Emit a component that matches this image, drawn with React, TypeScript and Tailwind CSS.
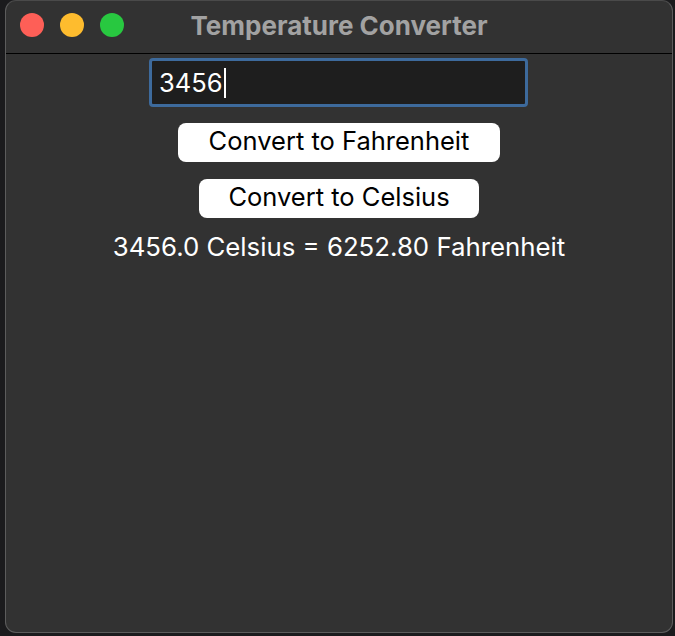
export default function App() {
  return (
    <div className="w-[675px] h-[636px] bg-[#1b1b1d] pl-[5px] pr-[2px] pb-[3px] overflow-hidden" style={{ fontFamily: 'Inter, "Liberation Sans", sans-serif' }}>
      <div className="h-full flex flex-col bg-[#323232] rounded-[11px] border border-[#5c5c5c] border-t-[#4a4a4a] overflow-hidden">
        {/* Title bar */}
        <div className="relative h-[53px] shrink-0 flex items-center border-b border-black">
          <div className="absolute left-[14px] top-[12px] flex gap-[16px]">
            <span className="w-[24px] h-[24px] rounded-full bg-[#fe5f57]" />
            <span className="w-[24px] h-[24px] rounded-full bg-[#febc2e]" />
            <span className="w-[24px] h-[24px] rounded-full bg-[#28c840]" />
          </div>
          <div className="w-full text-center text-[26px] font-bold text-[#a2a2a2] -mt-[3px] leading-none">Temperature Converter</div>
        </div>

        {/* Content */}
        <div className="flex flex-col items-center pt-[4px]">
          <div className="w-[379px] h-[49px] -ml-[1px] rounded-[4px] border-[3px] border-[#3d6a9c] bg-[#1e1e1e] flex items-center pl-[7px]">
            <span className="text-[25.5px] text-white leading-none">3456</span>
            <span className="w-[2px] h-[30px] bg-white ml-[1px]" />
          </div>
          <button className="mt-[16px] w-[322px] h-[39px] pb-[3px] rounded-[8px] bg-white text-black text-[25.5px] leading-none">
            Convert to Fahrenheit
          </button>
          <button className="mt-[17px] w-[280px] h-[39px] pb-[3px] rounded-[8px] bg-white text-black text-[25.5px] leading-none">
            Convert to Celsius
          </button>
          <div className="mt-[16px] text-[25.8px] text-white leading-none">3456.0 Celsius = 6252.80 Fahrenheit</div>
        </div>
      </div>
    </div>
  )
}
